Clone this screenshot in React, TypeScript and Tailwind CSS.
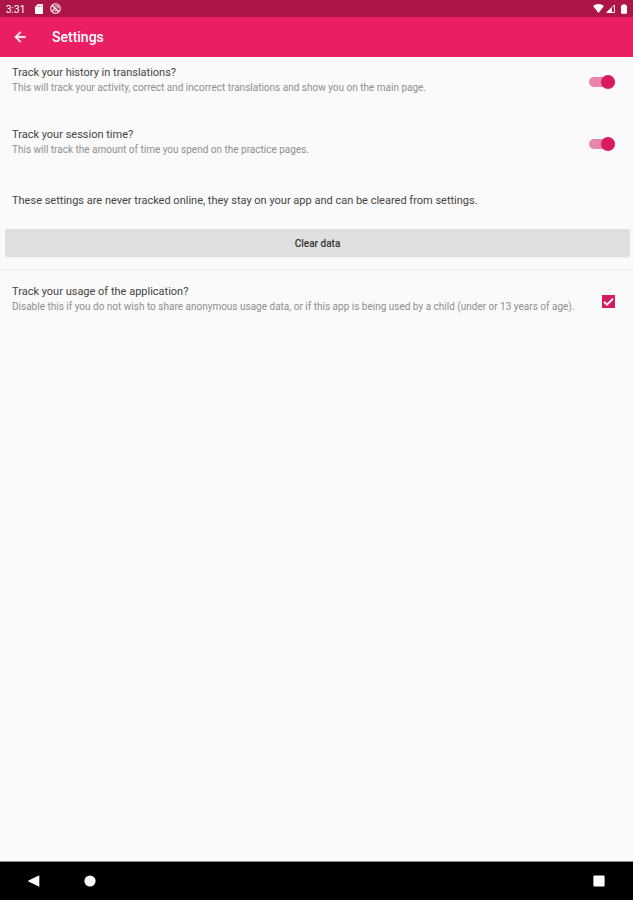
import { useState } from 'react';

const App = () => {
  const [trackHistory, setTrackHistory] = useState(true);
  const [trackTime, setTrackTime] = useState(true);
  const [trackUsage, setTrackUsage] = useState(true);

  return (
    <div className="min-h-screen flex flex-col bg-[#fafafa] font-['Roboto',sans-serif]">
      <StatusBar />

      {/* App bar */}
      <header className="flex h-10 items-center gap-6 bg-[#e91e63] px-3 text-white">
        <button type="button" aria-label="Back">
          <svg viewBox="0 0 24 24" className="size-4" fill="currentColor" stroke="currentColor" strokeWidth=".8">
            <path d="M20 11H7.83l5.59-5.59L12 4l-8 8 8 8 1.41-1.41L7.83 13H20v-2z" />
          </svg>
        </button>
        <h1 className="text-sm font-medium">Settings</h1>
      </header>

      <main className="flex-1">
        <SettingRow
          id="track-history"
          title="Track your history in translations?"
          description="This will track your activity, correct and incorrect translations and show you on the main page."
        >
          <Switch id="track-history" checked={trackHistory} onChange={setTrackHistory} />
        </SettingRow>
        <SettingRow
          id="track-time"
          title="Track your session time?"
          description="This will track the amount of time you spend on the practice pages."
        >
          <Switch id="track-time" checked={trackTime} onChange={setTrackTime} />
        </SettingRow>

        <p className="px-3 pt-3 text-[11px] leading-4 text-[#444444]">
          These settings are never tracked online, they stay on your app and can be cleared from settings.
        </p>
        <div className="pt-5 pr-[3px] pb-3 pl-[5px]">
          <button
            type="button"
            className="h-7 w-full rounded-xs border border-[#e2e2e2] bg-[#dfdfdf] text-[10px] font-medium text-[#333333] shadow-xs"
          >
            Clear data
          </button>
        </div>

        <div className="border-t border-[#ececec] pt-1.5">
          <SettingRow
            id="track-usage"
            title="Track your usage of the application?"
            description="Disable this if you do not wish to share anonymous usage data, or if this app is being used by a child (under or 13 years of age)."
          >
            <span className="grid">
              <input
                id="track-usage"
                type="checkbox"
                checked={trackUsage}
                onChange={(e) => setTrackUsage(e.target.checked)}
                className="peer col-start-1 row-start-1 size-[13px] appearance-none border border-[#757575] checked:border-[#d81b60] checked:bg-[#d81b60]"
              />
              <svg
                viewBox="0 0 12 12"
                className="pointer-events-none invisible col-start-1 row-start-1 size-[13px] peer-checked:visible"
                fill="none"
                stroke="white"
                strokeWidth="1.8"
              >
                <path d="M1.8 6.1l2.8 2.8L10.2 3.3" />
              </svg>
            </span>
          </SettingRow>
        </div>
      </main>

      <NavigationBar />
    </div>
  );
};

type SettingRowProps = {
  id: string;
  title: string;
  description: string;
  children: React.ReactNode;
};

const SettingRow = ({ id, title, description, children }: SettingRowProps) => (
  <div className="flex items-start justify-between gap-1 pt-2 pr-[18px] pb-5 pl-3">
    <label htmlFor={id} className="min-w-0">
      <span className="block text-[11px] leading-4 text-[#444444]">{title}</span>
      <span className="block text-[10px] leading-[14px] text-[#8f8f8f]">{description}</span>
    </label>
    <div className="flex h-[34px] w-[26px] shrink-0 items-center justify-end">{children}</div>
  </div>
);

type SwitchProps = {
  id: string;
  checked: boolean;
  onChange: (checked: boolean) => void;
};

const Switch = ({ id, checked, onChange }: SwitchProps) => (
  <input
    id={id}
    type="checkbox"
    role="switch"
    checked={checked}
    onChange={(e) => onChange(e.target.checked)}
    className="relative h-[14px] w-[26px] appearance-none before:absolute before:inset-x-0 before:top-[2px] before:h-[10px] before:rounded-full before:bg-[#bdbdbd] after:absolute after:left-0 after:size-[14px] after:rounded-full after:bg-[#f1f1f1] checked:before:bg-[#e985aa] checked:after:left-3 checked:after:bg-[#d81b60]"
  />
);

const StatusBar = () => (
  <div className="flex h-[17px] items-center bg-[#ad1547] px-1.5 text-[10px] text-white">
    <span className="pt-px">3:31</span>
    {/* SD card */}
    <svg viewBox="0 0 9 11" className="ml-2.5 h-[10px] w-2" fill="currentColor">
      <path d="M3.2 0H8a1 1 0 0 1 1 1v9a1 1 0 0 1-1 1H1a1 1 0 0 1-1-1V3.2z" />
      <path d="M3.4 1.5v2M5.2 1.5v2M7 1.5v2" stroke="#ad1547" strokeWidth=".6" />
    </svg>
    <svg viewBox="0 0 12 12" className="ml-[7px] size-[11px]" fill="none" stroke="currentColor" strokeWidth="1.1">
      <circle cx="6" cy="6" r="5.2" />
      <path d="M2.4 2.4l7.2 7.2" strokeWidth="1.4" />
      <path d="M2.6 8.8l2.6-3.2M4.8 8.4h2.4M5.4 3.2h1.8a1.6 1.6 0 0 1 1.2 2.7" />
    </svg>

    <div className="ml-auto flex items-center gap-0.5">
      <svg viewBox="0 0 12 10" className="h-[9px] w-[11px]" fill="currentColor">
        <path d="M0 2.3C3.4-.7 8.6-.7 12 2.3L6 10z" />
      </svg>
      <svg viewBox="0 0 10 10" className="size-[9px]" fill="none" stroke="currentColor">
        <path d="M9.4 1v8.4H1z" />
        <path d="M6 9.5V5L1 9.5z" fill="currentColor" />
      </svg>
      <svg viewBox="0 0 7 11" className="ml-1 h-[10px] w-1.5" fill="currentColor">
        <path d="M2 0h3v1h1.2a.8.8 0 0 1 .8.8v8.4a.8.8 0 0 1-.8.8H.8a.8.8 0 0 1-.8-.8V1.8A.8.8 0 0 1 .8 1H2z" />
      </svg>
    </div>
  </div>
);

const NavigationBar = () => (
  <nav className="flex h-[39px] items-center border-t border-[#8a8a8a] bg-black px-7 text-white">
    <button type="button" aria-label="Back">
      <svg viewBox="0 0 12 12" className="size-3" fill="currentColor">
        <path d="M11.3.3v11.4L.5 6.6a.7.7 0 0 1 0-1.2z" />
      </svg>
    </button>
    <button type="button" aria-label="Home" className="ml-11">
      <svg viewBox="0 0 12 12" className="size-3" fill="currentColor">
        <circle cx="6" cy="6" r="5.6" />
      </svg>
    </button>
    <button type="button" aria-label="Overview" className="ml-auto">
      <svg viewBox="0 0 12 12" className="size-3" fill="currentColor">
        <rect x=".4" y=".4" width="11.2" height="11.2" rx="1" />
      </svg>
    </button>
  </nav>
);

export default App;
